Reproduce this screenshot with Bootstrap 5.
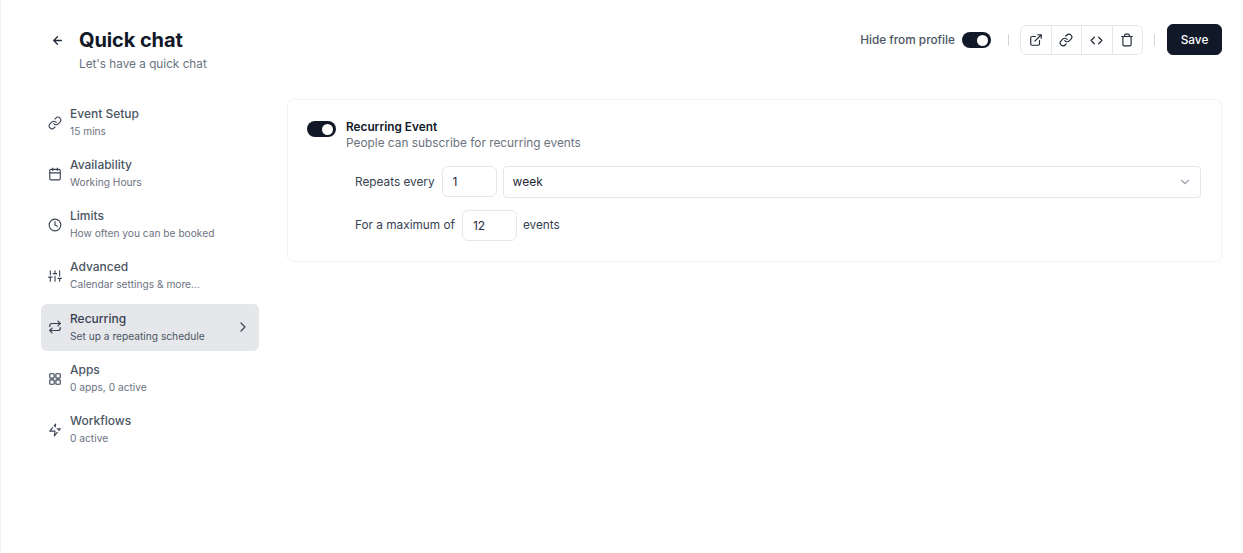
<!doctype html>
<html lang="en"><head><meta charset="utf-8"><title>Quick chat</title>
<link href="https://cdn.jsdelivr.net/npm/bootstrap@5.3.0/dist/css/bootstrap.min.css" rel="stylesheet">
<style>
html,body{height:100%}
body{font-family:Inter,"Liberation Sans",sans-serif;color:#374151;background:#fff;font-size:12px;overflow:hidden}
.pg{height:553px;border-left:1px solid #f3f4f6;padding:24px 21px 0 40px}
.hdr{height:75px;align-items:flex-start}
.hdracts{height:31px}
.backico{width:13px;height:13px;margin:10px 0 0 10px;color:#1f2937}
.ttl{font-weight:700;font-size:20px;line-height:30px;color:#111827;margin:1px 0 0;letter-spacing:-.1px}
.subttl{font-size:11.75px;line-height:16px;color:#6b7280;margin-top:1px}
.ttlwrap{margin-left:15px}
.hide{font-size:11.8px;color:#4b5563;font-weight:500;padding-top:3px;margin-left:1px}
.gap7{margin-right:7px}
.tog{width:29px;height:16px;border-radius:8px;background:#111827;position:relative;display:inline-block;flex:none}
.hdracts .tog{margin-top:1px}
.tog::after{content:"";position:absolute;right:3px;top:2.5px;width:11px;height:11px;border-radius:50%;background:#fff}
.sepv{width:1px;height:12px;background:#d1d5db}
.sepa{margin:1px 11px 0 17px}
.sepb{margin:1px 12px 0 11px}
.igroup{border:1px solid #e5e7eb;border-radius:6px;height:30px;width:123px;display:flex;overflow:hidden;margin-top:1px}
.igroup span{flex:1;display:flex;align-items:center;justify-content:center;color:#1f2937;border-right:1px solid #e5e7eb}
.igroup span:last-child{border-right:0}
.savebtn{--bs-btn-bg:#111827;--bs-btn-border-color:#111827;--bs-btn-color:#fff;--bs-btn-hover-bg:#111827;--bs-btn-hover-color:#fff;--bs-btn-font-size:11.8px;--bs-btn-font-weight:500;--bs-btn-border-radius:6px;--bs-btn-padding-x:0;--bs-btn-padding-y:0;height:31px;width:55px;line-height:31px}
.side{width:218px;flex:none}
.sitem{height:47.2px;border-radius:6px;padding:0 8px 0 7px;display:flex;align-items:center;color:#4b5563;text-decoration:none;margin-bottom:4px}
.sitem svg.ic{flex:none;margin-right:8px;color:#374151}
.sitem.on{background:#e5e7eb}
.sname{font-size:12px;line-height:16px;font-weight:500;color:#4b5563;margin-top:-1.5px}
.ssub{font-size:10.2px;line-height:14px;color:#6b7280;margin-top:2px}
.sitem.on .sname{color:#374151}.sitem.on .ssub{color:#4b5563}
.panel{margin-left:28px;flex:1;height:163px;border:1px solid #f3f4f6;border-radius:6px;padding:19px 20px 0 19px}
.tog.big{margin-top:2px;margin-right:10px}
.evt{font-size:11.8px;font-weight:600;line-height:15px;color:#111827;padding-top:1px}
.evtsub{font-size:11.85px;line-height:17px;color:#6b7280}
.rows{padding-left:48px;padding-top:14px}
.lab{color:#374151;font-size:11.8px;padding-top:1px}
.lg7{margin-right:7px}
.rowa{margin-bottom:12px;align-items:flex-start}
.rowa .lab{line-height:31px}
.numbox{width:55px;height:31px;flex:none;border:1px solid #e5e7eb;border-radius:6px;font-size:12px;color:#1f2937;padding:0 10px;font-family:inherit;box-shadow:none}
.gap6{margin-right:6px}
.selbox{height:32px;border:1px solid #e5e7eb;border-radius:4px;font-size:12px;color:#1f2937;padding:0 9px;--bs-form-select-bg-img:none;background:#fff;font-family:inherit}
.selwrap{position:relative}
.selwrap svg{position:absolute;right:9px;top:9px;color:#9ca3af;pointer-events:none}
</style></head><body>
<div class="pg">
<div class="d-flex hdr">
 <svg class="backico" viewBox="0 0 24 24" fill="none" stroke="currentColor" stroke-width="2.4" stroke-linecap="round" stroke-linejoin="round"><path d="M19 12H5M12 19l-7-7 7-7"/></svg>
 <div class="ttlwrap"><h1 class="ttl">Quick chat</h1><div class="subttl">Let's have a quick chat</div></div>
 <div class="ms-auto d-flex align-items-center hdracts">
  <span class="hide gap7">Hide from profile</span><span class="tog"></span>
  <span class="sepv sepa"></span>
  <div class="igroup">
   <span><svg width="14" height="14" viewBox="0 0 24 24" fill="none" stroke="currentColor" stroke-width="2" stroke-linecap="round" stroke-linejoin="round"><path d="M18 13v6a2 2 0 0 1-2 2H5a2 2 0 0 1-2-2V8a2 2 0 0 1 2-2h6M15 3h6v6M10 14 21 3"/></svg></span>
   <span><svg width="14" height="14" viewBox="0 0 24 24" fill="none" stroke="currentColor" stroke-width="2" stroke-linecap="round" stroke-linejoin="round"><path d="M10 13a5 5 0 0 0 7.54.54l3-3a5 5 0 0 0-7.07-7.07l-1.72 1.71"/><path d="M14 11a5 5 0 0 0-7.54-.54l-3 3a5 5 0 0 0 7.07 7.07l1.71-1.71"/></svg></span>
   <span><svg width="13" height="13" viewBox="0 0 24 24" fill="none" stroke="currentColor" stroke-width="2.2" stroke-linecap="round" stroke-linejoin="round"><path d="m16 18 6-6-6-6M8 6l-6 6 6 6"/></svg></span>
   <span><svg width="14" height="14" viewBox="0 0 24 24" fill="none" stroke="currentColor" stroke-width="2" stroke-linecap="round" stroke-linejoin="round"><path d="M3 6h18M19 6v14a2 2 0 0 1-2 2H7a2 2 0 0 1-2-2V6M8 6V4a2 2 0 0 1 2-2h4a2 2 0 0 1 2 2v2"/></svg></span>
  </div>
  <span class="sepv sepb"></span>
  <button type="button" class="btn savebtn">Save</button>
 </div>
</div>
<div class="d-flex">
 <nav class="side">
  <a class="sitem" href="#"><svg class="ic" width="14" height="14" viewBox="0 0 24 24" fill="none" stroke="currentColor" stroke-width="1.9" stroke-linecap="round" stroke-linejoin="round"><path d="M10 13a5 5 0 0 0 7.54.54l3-3a5 5 0 0 0-7.07-7.07l-1.72 1.71"/><path d="M14 11a5 5 0 0 0-7.54-.54l-3 3a5 5 0 0 0 7.07 7.07l1.71-1.71"/></svg><div><div class="sname">Event Setup</div><div class="ssub">15 mins</div></div></a>
  <a class="sitem" href="#"><svg class="ic" width="14" height="14" viewBox="0 0 24 24" fill="none" stroke="currentColor" stroke-width="1.9" stroke-linecap="round" stroke-linejoin="round"><rect x="3" y="4" width="18" height="18" rx="2"/><path d="M16 2v4M8 2v4M3 10h18"/></svg><div><div class="sname">Availability</div><div class="ssub">Working Hours</div></div></a>
  <a class="sitem" href="#"><svg class="ic" width="14" height="14" viewBox="0 0 24 24" fill="none" stroke="currentColor" stroke-width="1.9" stroke-linecap="round" stroke-linejoin="round"><circle cx="12" cy="12" r="10"/><path d="M12 6v6l4 2"/></svg><div><div class="sname">Limits</div><div class="ssub">How often you can be booked</div></div></a>
  <a class="sitem" href="#"><svg class="ic" width="14" height="14" viewBox="0 0 24 24" fill="none" stroke="currentColor" stroke-width="1.9" stroke-linecap="round" stroke-linejoin="round"><path d="M4 21v-7M4 10V3M12 21v-9M12 8V3M20 21v-5M20 12V3M1 14h6M9 8h6M17 16h6"/></svg><div><div class="sname">Advanced</div><div class="ssub">Calendar settings &amp; more...</div></div></a>
  <a class="sitem on" href="#"><svg class="ic" width="14" height="14" viewBox="0 0 24 24" fill="none" stroke="currentColor" stroke-width="2.1" stroke-linecap="round" stroke-linejoin="round"><path d="m17 2 4 4-4 4"/><path d="M3 11v-1a4 4 0 0 1 4-4h14"/><path d="m7 22-4-4 4-4"/><path d="M21 13v1a4 4 0 0 1-4 4H3"/></svg><div><div class="sname">Recurring</div><div class="ssub">Set up a repeating schedule</div></div><svg class="ms-auto" width="16" height="16" viewBox="0 0 24 24" fill="none" stroke="#374151" stroke-width="1.8" stroke-linecap="round" stroke-linejoin="round"><path d="m9 18 6-6-6-6"/></svg></a>
  <a class="sitem" href="#"><svg class="ic" width="14" height="14" viewBox="0 0 24 24" fill="none" stroke="currentColor" stroke-width="1.9" stroke-linecap="round" stroke-linejoin="round"><rect x="3" y="3" width="7.5" height="7.5" rx="1"/><rect x="13.5" y="3" width="7.5" height="7.5" rx="1"/><rect x="13.5" y="13.5" width="7.5" height="7.5" rx="1"/><rect x="3" y="13.5" width="7.5" height="7.5" rx="1"/></svg><div><div class="sname">Apps</div><div class="ssub">0 apps, 0 active</div></div></a>
  <a class="sitem" href="#"><svg class="ic" width="14" height="14" viewBox="0 0 24 24" fill="none" stroke="currentColor" stroke-width="1.9" stroke-linecap="round" stroke-linejoin="round"><path d="M12.41 6.75 13 2l-2.43 2.92M18.57 12.91 21 10h-5.34M8 8l-5 6h9l-1 8 5-6"/></svg><div><div class="sname">Workflows</div><div class="ssub">0 active</div></div></a>
 </nav>
 <main class="panel">
  <div class="d-flex">
   <span class="tog big"></span>
   <div><div class="evt">Recurring Event</div><div class="evtsub">People can subscribe for recurring events</div></div>
  </div>
  <div class="rows">
   <div class="d-flex rowa">
    <span class="lab lg7">Repeats every</span>
    <input class="form-control numbox gap6" value="1" aria-label="Repeats every">
    <div class="flex-grow-1 selwrap"><select class="form-select selbox" aria-label="Unit"><option>week</option></select><svg width="14" height="14" viewBox="0 0 24 24" fill="none" stroke="currentColor" stroke-width="2" stroke-linecap="round" stroke-linejoin="round"><path d="m6 9 6 6 6-6"/></svg></div>
   </div>
   <div class="d-flex align-items-center">
    <span class="lab lg7">For a maximum of</span>
    <input class="form-control numbox gap6" value="12" aria-label="Maximum">
    <span class="lab">events</span>
   </div>
  </div>
 </main>
</div>
</div>
</body></html>
